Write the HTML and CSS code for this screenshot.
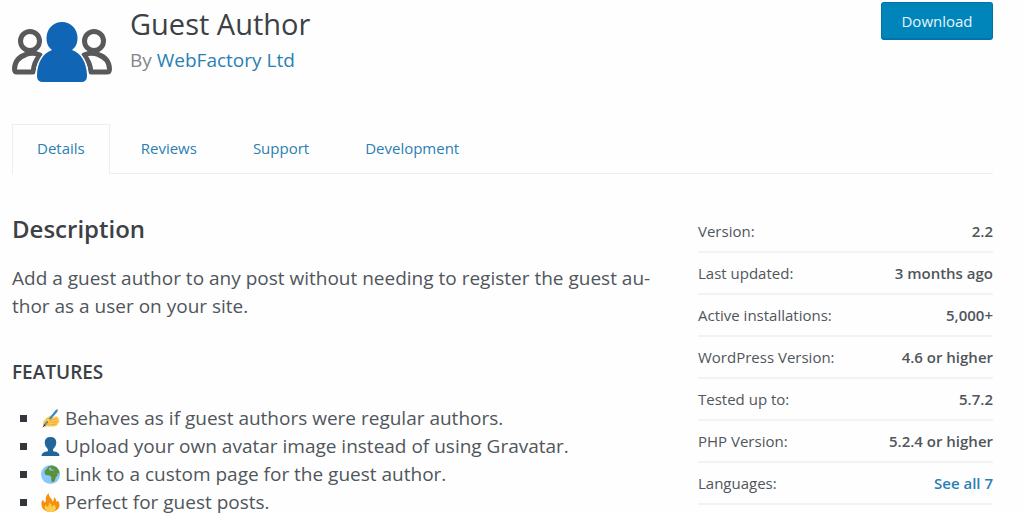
FILE: index.html
```html
<!DOCTYPE html>
<html lang="en">
<head>
<meta charset="utf-8">
<meta name="viewport" content="width=device-width, initial-scale=1">
<title>Guest Author</title>
<link rel="stylesheet" href="styles.css">
</head>
<body>
<div class="page">
  <header class="plugin-header">
    <svg class="plugin-icon" viewBox="0 0 100 64" aria-hidden="true">
      <g fill="none" stroke="#58595b" stroke-width="5" stroke-linejoin="round">
        <circle cx="18" cy="21" r="9.500"/>
        <path d="M14 34.500Q3 38 2.500 49Q2.500 52 5 52H21Q22 42 28 35Q21 32 14 34.500Z"/>
        <circle cx="82" cy="21" r="9.500"/>
        <path d="M86 34.500Q97 38 97.500 49Q97.500 52 95 52H79Q78 42 72 35Q79 32 86 34.500Z"/>
      </g>
      <path d="M40 30C36 27 34.500 23 34.500 18C34.500 9 41 2 50 2S65.500 9 65.500 18C65.500 23 64 27 60 30C69 33 75 43 75 56Q75 62 69 62H31Q25 62 25 56C25 43 31 33 40 30Z" fill="#1065b5" stroke="#fff" stroke-width="3" paint-order="stroke"/>
    </svg>
    <div class="plugin-heading">
      <h1 class="plugin-title">Guest Author</h1>
      <p class="byline">By <a href="#">WebFactory Ltd</a></p>
    </div>
    <button class="download" type="button">Download</button>
  </header>

  <nav class="tabs" aria-label="Plugin sections">
    <a class="tab tab-active" href="#" aria-current="page">Details</a>
    <a class="tab" href="#">Reviews</a>
    <a class="tab" href="#">Support</a>
    <a class="tab" href="#">Development</a>
  </nav>

  <div class="columns">
    <main class="content">
      <h2 class="section-title">Description</h2>
      <p class="summary">Add a guest author to any post without needing to register the guest au&shy;thor as a user on your site.</p>
      <h3 class="features-title">FEATURES</h3>
      <ul class="features">
        <li><svg class="emoji" viewBox="0 0 36 36" aria-hidden="true"><path d="M4 24Q9 17 17 13Q23 10 23 14Q23 16 19 18L27 14Q32 13 32 17Q36 18 34 22Q37 25 32 28Q31 33 23 33H4Z" fill="#ffcc4d"/><path d="M17 22L31 18M19 26L32 23M19 30L30 28" stroke="#ef9645" stroke-width="1.500" fill="none"/><path d="M6 29L28 2L32 0L31 5L9 31Z" fill="#3b88c3"/><path d="M6 29L3 35L9 31Z" fill="#292f33"/><path d="M9 19Q17 16 18 22Q17 27 10 28L18 31" fill="#ffcc4d" stroke="#ef9645"/></svg>Behaves as if guest authors were regular authors.</li>
        <li><svg class="emoji" viewBox="0 0 36 36" aria-hidden="true"><path d="M13 27V23Q7 18 7 11Q7 0 18 0T29 11Q29 18 23 23V27Q35 28 35 36H1Q1 28 13 27Z" fill="#226699"/></svg>Upload your own avatar image instead of using Gravatar.</li>
        <li><svg class="emoji" viewBox="0 0 36 36" aria-hidden="true"><circle cx="18" cy="18" r="18" fill="#88c9f9"/><path d="M7 11L11 7L14 3L21 1L29 4L34 10L35 17L30 15L32 19L28 23L26 30L22 33L19 29L20 23L16 20L9 19L7 16Z" fill="#5c913b"/><path d="M15 6L20 4L18 8L25 9L23 11L16 10Z" fill="#88c9f9"/></svg>Link to a custom page for the guest author.</li>
        <li><svg class="emoji" viewBox="0 0 36 36" aria-hidden="true"><path d="M18 36C8 36 2 30 1 23C0 18 2 15 4 12Q4 17 7 18Q10 17 9 11Q8 5 15 0Q14 6 18 9Q22 13 22 17Q25 14 25 8Q29 11 29 16Q30 18 32 14Q35 18 35 23C35 30 28 36 18 36Z" fill="#f4900c"/><path d="M18 36C11 36 7 32 7 27Q7 24 9 22Q10 26 12 26Q16 24 15 18Q21 21 21 26Q24 26 24 22Q28 24 28 28C28 33 24 36 18 36Z" fill="#ffcc4d"/></svg>Perfect for guest posts.</li>
      </ul>
    </main>
    <aside class="meta">
      <dl class="meta-list">
        <div class="meta-row"><dt>Version:</dt><dd>2.2</dd></div>
        <div class="meta-row"><dt>Last updated:</dt><dd>3 months ago</dd></div>
        <div class="meta-row"><dt>Active installations:</dt><dd>5,000+</dd></div>
        <div class="meta-row"><dt>WordPress Version:</dt><dd>4.6 or higher</dd></div>
        <div class="meta-row"><dt>Tested up to:</dt><dd>5.7.2</dd></div>
        <div class="meta-row"><dt>PHP Version:</dt><dd>5.2.4 or higher</dd></div>
        <div class="meta-row"><dt>Languages:</dt><dd><a href="#">See all 7</a></dd></div>
      </dl>
    </aside>
  </div>
</div>
</body>
</html>
```

FILE: styles.css
```css
* { box-sizing: border-box; }
body {
  margin: 0;
  background: #fefefe;
  color: #50565c;
  font-family: "Open Sans", sans-serif;
  font-size: 19px;
  line-height: 28px;
}
h1, h2, h3, p, ul, dl, dd { margin: 0; padding: 0; }
a { color: #2a7fb4; text-decoration: none; }
.page { padding: 2px 31px 0 12px; }
.plugin-header {
  display: flex;
  align-items: flex-start;
}
.plugin-icon {
  width: 100px;
  height: 64px;
  margin-top: 18px;
}
.plugin-heading {
  flex: 1;
  margin-left: 18px;
}
.plugin-title {
  color: #3c4146;
  font-size: 29px;
  font-weight: 400;
  line-height: 44px;
}
.byline { color: #82878c; }
.download {
  height: 38px;
  width: 112px;
  padding: 0;
  border: 1px solid #0073aa;
  border-bottom-width: 2px;
  border-radius: 3px;
  background: #0085ba;
  color: #e8f4fa;
  font: 400 15px/20px "Open Sans", sans-serif;
}
.tabs {
  display: flex;
  margin-top: 40px;
  border-bottom: 1px solid #eee;
  font-size: 15px;
}
.tab {
  margin: 0 6px -1px 0;
  padding: 9px 24px 12px;
  border: 1px solid transparent;
  border-bottom: 0;
}
.tab-active {
  border-color: #eee;
  background: #fefefe;
}
.columns {
  display: grid;
  grid-template-columns: minmax(0, 640fr) minmax(0, 295fr);
  column-gap: 46px;
}
.content { padding-top: 41px; }
.section-title {
  color: #3c4146;
  font-size: 24px;
  font-weight: 600;
}
.summary { margin-top: 21px; }
.features-title {
  margin-top: 38px;
  color: #3c4146;
  font-size: 19px;
  font-weight: 600;
}
.features {
  margin-top: 18px;
  padding-left: 28px;
  list-style: square;
}
.features li::marker { color: #32373c; }
.emoji {
  width: 19px;
  height: 19px;
  margin: 0 5px 0 1px;
  vertical-align: -3px;
}
.meta { padding-top: 37px; }
.meta-row {
  display: flex;
  justify-content: space-between;
  padding: 10px 0;
  border-bottom: 2px solid #f3f3f3;
  font-size: 15px;
  line-height: 20px;
}
.meta-row dd { font-weight: 600; }
```
